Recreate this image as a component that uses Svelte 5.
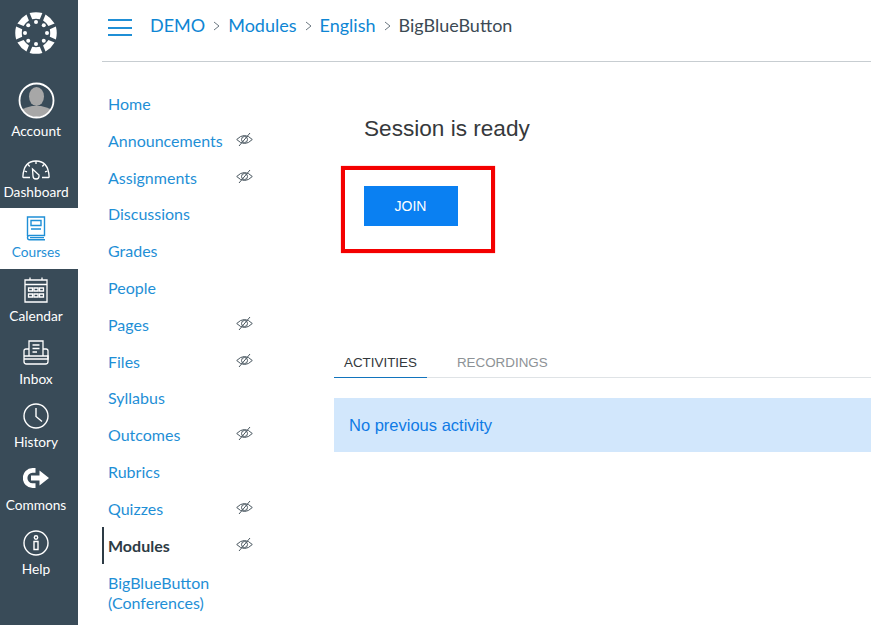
<script>
  const dots = [0, 45, 90, 135, 180, 225, 270, 315].map(a => ({
    x: 21 + 11 * Math.sin((a * Math.PI) / 180),
    y: 21 - 11 * Math.cos((a * Math.PI) / 180)
  }));

  const wedges = [0, 45, 90, 135, 180, 225, 270, 315];

  const courseLinks = [
    { label: 'Home' },
    { label: 'Announcements', hidden: true },
    { label: 'Assignments', hidden: true },
    { label: 'Discussions' },
    { label: 'Grades' },
    { label: 'People' },
    { label: 'Pages', hidden: true },
    { label: 'Files', hidden: true },
    { label: 'Syllabus' },
    { label: 'Outcomes', hidden: true },
    { label: 'Rubrics' },
    { label: 'Quizzes', hidden: true },
    { label: 'Modules', hidden: true, active: true }
  ];
</script>

<div class="page">
  <nav class="global-nav">
    <div class="logo">
      <svg width="42" height="42" viewBox="0 0 42 42" fill="#fff">
        {#each wedges as a}
          <path d="M14.6 1.1 Q21 -0.6 27.4 1.1 L24.8 7.2 Q21 6.4 17.2 7.2 Z" transform="rotate({a} 21 21)" />
        {/each}
        {#each dots as d}
          <circle cx={d.x} cy={d.y} r="2" />
        {/each}
      </svg>
    </div>

    <div class="nav-item account">
      <svg width="37" height="37" viewBox="0 0 37 37">
        <defs>
          <clipPath id="avatar"><circle cx="18.5" cy="18.5" r="16.5" /></clipPath>
        </defs>
        <g clip-path="url(#avatar)" fill="#a7a7a7">
          <ellipse cx="18.5" cy="14.5" rx="7.5" ry="9.5" />
          <path d="M2 37 V30 Q4 26 14 24 H23 Q33 26 35 30 V37 Z" />
        </g>
        <circle cx="18.5" cy="18.5" r="17" fill="none" stroke="#fff" stroke-width="1.8" />
      </svg>
      <span>Account</span>
    </div>

    <div class="nav-item dash">
      <svg width="28" height="20" viewBox="0 0 28 20" fill="none" stroke="#fff" stroke-width="1.3">
        <path d="M8 17.5 H1.5 Q0.8 17.5 0.9 16.5 Q1.8 1 14 1 Q26.2 1 27.1 16.5 Q27.2 17.5 26.5 17.5 H20" />
        <path d="M14 1 V4 M6 4.5 L7.7 6.5 M22 4.5 L20.3 6.5 M2.5 11 L5 11.8 M25.5 11 L23 11.8" />
        <path d="M10.5 9 L17 15 Q17.5 19 14 19 Q11 19 11 16 Z" />
      </svg>
      <span>Dashboard</span>
    </div>

    <div class="nav-item courses">
      <svg width="20" height="25" viewBox="0 0 20 25" fill="none" stroke="#1f8fd6" stroke-width="1.4">
        <path d="M1.5 20 V1 H18.5 V19.5 H3.5 Q1.5 19.5 1.5 21.5 Q1.5 23.7 3.5 23.7 H19" />
        <path d="M5 4.5 H15 V9.5 H5 Z" />
        <path d="M5 13 H15 M4 21.6 H18" />
      </svg>
      <span>Courses</span>
    </div>

    <div class="nav-item cal">
      <svg width="24" height="26" viewBox="0 0 24 26" fill="none" stroke="#fff" stroke-width="1.3">
        <path d="M1 3 H23 V25 H1 Z" />
        <path d="M1 7.5 H23 M6 0.5 V3 M18 0.5 V3" />
        <path d="M4.5 11 H8.5 V14 H4.5 Z M10 11 H14 V14 H10 Z M15.5 11 H19.5 V14 H15.5 Z M4.5 17 H8.5 V20 H4.5 Z M10 17 H14 V20 H10 Z M15.5 17 H19.5 V20 H15.5 Z" />
      </svg>
      <span>Calendar</span>
    </div>

    <div class="nav-item inbox">
      <svg width="26" height="25" viewBox="0 0 26 25" fill="none" stroke="#fff" stroke-width="1.3">
        <path d="M6 16 V1 H20 V16" />
        <path d="M9.5 5 H16.5 M9.5 8.5 H16.5 M9.5 12 H14" />
        <path d="M6 9 H3 Q1 9 1 11 V21.5 Q1 24 3.5 24 H22.5 Q25 24 25 21.5 V11 Q25 9 23 9 H20" />
        <path d="M1 16 H25 V19 H1" />
      </svg>
      <span>Inbox</span>
    </div>

    <div class="nav-item hist">
      <svg width="26" height="26" viewBox="0 0 26 26" fill="none" stroke="#fff" stroke-width="1.4">
        <circle cx="13" cy="13" r="12" />
        <path d="M13 5 V13.5 L19 18.5" />
      </svg>
      <span>History</span>
    </div>

    <div class="nav-item commons">
      <svg width="26" height="20" viewBox="0 0 26 20" fill="none">
        <path d="M12.5 2.4 H9.5 A7.4 7.6 0 0 0 9.5 17.6 H12.5" stroke="#fff" stroke-width="4.6" />
        <path d="M8 7.5 H16.5 V2.5 L26 10 L16.5 17.5 V12.5 H8 Z" fill="#fff" />
      </svg>
      <span>Commons</span>
    </div>

    <div class="nav-item help">
      <svg width="26" height="26" viewBox="0 0 26 26" fill="none" stroke="#fff" stroke-width="1.4">
        <circle cx="13" cy="13" r="12" />
        <circle cx="13" cy="7.5" r="1.7" />
        <path d="M11 11.5 H15 V19.5 H11 Z" />
      </svg>
      <span>Help</span>
    </div>
  </nav>

  <div class="content">
    <header class="topbar">
      <div class="burger"><i></i><i></i><i></i></div>
      <ol class="crumbs">
        <li><a href="#demo">DEMO</a></li>
        <li class="sep">
          <svg width="7" height="10" viewBox="0 0 7 10" fill="none" stroke="#6b7780"><path d="M1 1 L6 5 L1 9" /></svg>
        </li>
        <li><a href="#modules">Modules</a></li>
        <li class="sep">
          <svg width="7" height="10" viewBox="0 0 7 10" fill="none" stroke="#6b7780"><path d="M1 1 L6 5 L1 9" /></svg>
        </li>
        <li><a href="#english">English</a></li>
        <li class="sep">
          <svg width="7" height="10" viewBox="0 0 7 10" fill="none" stroke="#6b7780"><path d="M1 1 L6 5 L1 9" /></svg>
        </li>
        <li class="current">BigBlueButton</li>
      </ol>
    </header>

    <div class="body">
      <ul class="course-nav">
        {#each courseLinks as link}
          <li class:active={link.active}>
            <span class="link">{link.label}</span>
            {#if link.hidden}
              <svg class="eye" width="17" height="15" viewBox="0 0 17 15" fill="none" stroke="#4a5760" stroke-width="1">
                <path d="M0.7 7.5 Q8.5 -0.5 16.3 7.5 Q8.5 15.5 0.7 7.5 Z" />
                <circle cx="8.5" cy="7.5" r="3" />
                <path d="M3 14 L14 1" />
              </svg>
            {/if}
          </li>
        {/each}
        <li class="two-line"><span class="link">BigBlueButton (Conferences)</span></li>
      </ul>

      <main class="main">
        <div class="session">
          <h1>Session is ready</h1>
          <div class="join-frame">
            <button>JOIN</button>
          </div>
        </div>

        <div class="tabs">
          <span class="tab selected">ACTIVITIES</span>
          <span class="tab">RECORDINGS</span>
        </div>
        <div class="alert">No previous activity</div>
      </main>
    </div>
  </div>
</div>

<style>
  :global(body) {
    margin: 0;
    background: #fff;
    overflow: hidden;
  }

  .page {
    display: flex;
    width: 871px;
    height: 625px;
    overflow: hidden;
    font-family: Lato, "Liberation Sans", sans-serif;
  }

  .global-nav {
    width: 78px;
    flex: none;
    background: #394b58;
    color: #fff;
    display: flex;
    flex-direction: column;
    align-items: stretch;
  }

  .logo {
    height: 80px;
    padding: 12px 6px 0 0;
    box-sizing: border-box;
    display: flex;
    justify-content: center;
  }

  .nav-item {
    height: 63px;
    box-sizing: border-box;
    padding-right: 6px;
    display: flex;
    flex-direction: column;
    align-items: center;
    font-size: 13.7px;
    line-height: 17px;
  }

  .nav-item span {
    display: block;
  }

  .account {
    height: 65px;
    padding-top: 2px;
    gap: 3px;
  }

  .dash {
    height: 63px;
    padding-top: 15px;
    gap: 3px;
  }

  .courses {
    height: 61px;
    padding-top: 8px;
    gap: 2px;
    background: #fff;
    color: #1f8fd6;
  }

  .cal {
    height: 63px;
    padding-top: 8px;
    gap: 4px;
  }

  .inbox {
    padding-top: 8px;
    gap: 5px;
    height: 63px;
  }

  .hist {
    padding-top: 8px;
    gap: 4px;
  }

  .commons {
    padding-top: 10px;
    gap: 8px;
  }

  .help {
    padding-top: 9px;
    gap: 4px;
  }

  .content {
    flex: 1;
    min-width: 0;
    display: flex;
    flex-direction: column;
  }

  .topbar {
    height: 61px;
    margin-left: 24px;
    box-sizing: content-box;
    border-bottom: 1px solid #c7cdd1;
    display: flex;
    align-items: flex-start;
    padding-top: 0;
  }

  .burger {
    margin: 19px 0 0 6px;
    width: 24px;
    display: flex;
    flex-direction: column;
    gap: 5.5px;
  }

  .burger i {
    display: block;
    height: 2px;
    background: #1f8fd6;
  }

  .crumbs {
    list-style: none;
    margin: 14px 0 0 18px;
    padding: 0;
    display: flex;
    align-items: center;
    font-size: 18px;
    line-height: 22px;
    gap: 8px;
  }

  .crumbs a {
    color: #0e86d4;
    text-decoration: none;
  }

  .crumbs .sep {
    display: flex;
    padding-top: 2px;
  }

  .crumbs .current {
    color: #3c4a54;
  }

  .body {
    display: flex;
    flex: 1;
  }

  .course-nav {
    list-style: none;
    margin: 23.2px 0 0 24px;
    padding: 0;
    width: 232px;
    flex: none;
    font-size: 16px;
    color: #1f8fd6;
  }

  .course-nav li {
    height: 36.8px;
    padding-left: 6px;
    box-sizing: border-box;
    display: flex;
    align-items: center;
    position: relative;
  }

  .course-nav li.active {
    color: #2d3b45;
    font-weight: 700;
    border-left: 2px solid #2d3b45;
    padding-left: 4px;
  }

  .course-nav .eye {
    position: absolute;
    left: 134px;
    top: 10px;
  }

  .course-nav li.active .eye {
    left: 132px;
  }

  .course-nav .two-line {
    height: auto;
    width: 120px;
    line-height: 20px;
    margin-top: 9.4px;
  }

  .main {
    flex: 1;
    min-width: 0;
    font-family: "Liberation Sans", Arial, sans-serif;
  }

  .session {
    padding: 53px 0 0 7px;
    height: 255px;
    box-sizing: border-box;
  }

  .session h1 {
    margin: 0 0 23px 23px;
    font-size: 22.6px;
    line-height: 28px;
    font-weight: 400;
    color: #36393c;
  }

  .join-frame {
    width: 154px;
    height: 87px;
    box-sizing: border-box;
    border: 4.5px solid #f40000;
    padding: 15.5px 0 0 18.5px;
    margin-top: 0;
    box-shadow: 0 0 1px #f66;
  }

  .join-frame button {
    display: block;
    width: 94px;
    height: 40px;
    border: 0;
    padding: 0;
    background: #0a80f2;
    color: #fff;
    font-family: inherit;
    font-size: 14px;
  }

  .tabs {
    display: flex;
    height: 31px;
    margin-top: 30px;
    border-bottom: 1px solid #dfe3e6;
    box-sizing: border-box;
    font-size: 13.4px;
    line-height: 32px;
  }

  .tab {
    padding: 0 10px;
    margin-right: 20px;
    color: #8d9296;
  }

  .tab.selected {
    color: #33383c;
    border-bottom: 1px solid #1274bd;
    height: 31px;
    box-sizing: border-box;
  }

  .alert {
    margin-top: 20px;
    height: 54px;
    padding-left: 15px;
    background: #d2e7fc;
    color: #0f7ae5;
    font-size: 16.5px;
    line-height: 55px;
  }
</style>
